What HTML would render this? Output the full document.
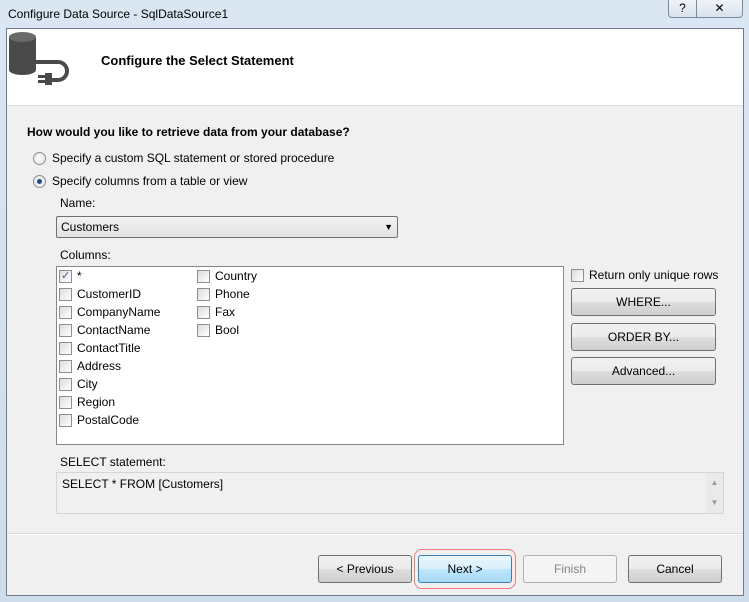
<!DOCTYPE html>
<html><head><style>
*{box-sizing:border-box;margin:0;padding:0}
body{width:749px;height:602px;position:relative;overflow:hidden;font-family:"Liberation Sans",sans-serif;font-size:12px;color:#000;background:linear-gradient(#dbe6f3,#cfdcec)}
.a{position:absolute;white-space:nowrap}
.cb{position:absolute;width:13px;height:13px;border:1px solid #8f8f8f;background:linear-gradient(135deg,#dcdcdc,#fff);}
.btn{position:absolute;height:28px;border:1px solid #707070;border-radius:3px;background:linear-gradient(#f2f2f2 0%,#ebebeb 50%,#dddddd 51%,#cfcfcf 100%);text-align:center;line-height:26px}
.rb{position:absolute;width:13px;height:13px;border-radius:50%;border:1px solid #8e8f8f;background:radial-gradient(#fff,#e0e0e0)}
</style></head><body>
<div class="a" style="left:8px;top:7px;font-size:12px">Configure Data Source - SqlDataSource1</div>
<div class="a" style="left:668px;top:0;width:29px;height:18px;border:1px solid #7a8aa0;border-top:none;border-radius:0 0 0 4px;background:linear-gradient(#f0f4f9,#d8e2ee);text-align:center;font-size:12px;line-height:16px">?</div>
<div class="a" style="left:696px;top:0;width:47px;height:18px;border:1px solid #7a8aa0;border-top:none;border-radius:0 0 4px 0;background:linear-gradient(#f0f4f9,#d8e2ee);text-align:center;font-size:12px;line-height:16px">✕</div>
<div class="a" style="left:6px;top:28px;width:738px;height:568px;border:1px solid #6d7b8c;background:#f0f0f0"></div>
<div class="a" style="left:7px;top:29px;width:736px;height:77px;background:#fff;border-bottom:1px solid #dfdfdf"></div>
<svg class="a" style="left:8px;top:32px" width="62" height="54" viewBox="0 0 62 54">
<rect x="1" y="5" width="27" height="33" fill="#4a4a4a"/>
<ellipse cx="14.5" cy="38" rx="13.5" ry="5" fill="#4a4a4a"/>
<ellipse cx="14.5" cy="5" rx="13.5" ry="5" fill="#6a6a6a"/>
<path d="M28 30 H50 A9 9 0 0 1 50 48 H44" fill="none" stroke="#4a4a4a" stroke-width="4"/>
<rect x="37" y="41" width="7" height="12" fill="#4a4a4a"/>
<rect x="30" y="43" width="7" height="3" fill="#4a4a4a"/><rect x="30" y="48" width="7" height="3" fill="#4a4a4a"/>
</svg>
<div class="a" style="left:101px;top:53px;font-weight:bold;font-size:13px">Configure the Select Statement</div>
<div class="a" style="left:27px;top:125px;font-weight:bold">How would you like to retrieve data from your database?</div>
<div class="rb" style="left:33px;top:152px"></div>
<div class="a" style="left:52px;top:151px">Specify a custom SQL statement or stored procedure</div>
<div class="rb" style="left:33px;top:175px"><div style="position:absolute;left:3px;top:3px;width:5px;height:5px;border-radius:50%;background:#1c4f8a"></div></div>
<div class="a" style="left:52px;top:174px">Specify columns from a table or view</div>
<div class="a" style="left:60px;top:196px">Name:</div>
<div class="a" style="left:56px;top:216px;width:342px;height:22px;border:1px solid #707070;border-radius:2px;background:linear-gradient(#f2f2f2,#e2e2e2)"><span class="a" style="left:4px;top:3px">Customers</span><span class="a" style="right:4px;top:5px;font-size:9px">▼</span></div>
<div class="a" style="left:60px;top:248px">Columns:</div>
<div class="a" style="left:56px;top:266px;width:508px;height:179px;border:1px solid #828790;background:#fff"></div>
<div class="cb" style="left:59px;top:270px"><span class="a" style="left:1px;top:-2px;color:#4a5f97;font-size:11px">✓</span></div><div class="a" style="left:77px;top:269px">*</div>
<div class="cb" style="left:59px;top:288px"></div><div class="a" style="left:77px;top:287px">CustomerID</div>
<div class="cb" style="left:59px;top:306px"></div><div class="a" style="left:77px;top:305px">CompanyName</div>
<div class="cb" style="left:59px;top:324px"></div><div class="a" style="left:77px;top:323px">ContactName</div>
<div class="cb" style="left:59px;top:342px"></div><div class="a" style="left:77px;top:341px">ContactTitle</div>
<div class="cb" style="left:59px;top:360px"></div><div class="a" style="left:77px;top:359px">Address</div>
<div class="cb" style="left:59px;top:378px"></div><div class="a" style="left:77px;top:377px">City</div>
<div class="cb" style="left:59px;top:396px"></div><div class="a" style="left:77px;top:395px">Region</div>
<div class="cb" style="left:59px;top:414px"></div><div class="a" style="left:77px;top:413px">PostalCode</div>
<div class="cb" style="left:197px;top:270px"></div><div class="a" style="left:215px;top:269px">Country</div>
<div class="cb" style="left:197px;top:288px"></div><div class="a" style="left:215px;top:287px">Phone</div>
<div class="cb" style="left:197px;top:306px"></div><div class="a" style="left:215px;top:305px">Fax</div>
<div class="cb" style="left:197px;top:324px"></div><div class="a" style="left:215px;top:323px">Bool</div>
<div class="cb" style="left:571px;top:269px"></div><div class="a" style="left:589px;top:268px">Return only unique rows</div>
<div class="btn" style="left:571px;top:288px;width:145px">WHERE...</div>
<div class="btn" style="left:571px;top:323px;width:145px">ORDER BY...</div>
<div class="btn" style="left:571px;top:357px;width:145px">Advanced...</div>
<div class="a" style="left:60px;top:455px">SELECT statement:</div>
<div class="a" style="left:56px;top:472px;width:668px;height:42px;border:1px solid #d5d5d5;background:#f0f0f0"><span class="a" style="left:5px;top:4px">SELECT * FROM [Customers]</span><div class="a" style="right:0;top:0;width:17px;height:40px;background:#eaeaea;color:#999;font-size:8px;text-align:center;line-height:20px">▲<br>▼</div></div>
<div class="a" style="left:7px;top:533px;width:736px;border-top:1px solid #dadada;border-bottom:1px solid #fff"></div>
<div class="btn" style="left:318px;top:555px;width:94px">&lt; Previous</div>
<div class="a" style="left:414px;top:549px;width:102px;height:40px;border:1px solid #f27c7c;border-radius:8px"></div>
<div class="btn" style="left:418px;top:555px;width:94px;border-color:#3c7fb1;background:linear-gradient(#eaf6fd,#d9f0fc 50%,#bee6fd 51%,#a7d9f5)">Next &gt;</div>
<div class="btn" style="left:523px;top:555px;width:94px;border-color:#adb2b5;background:#f4f4f4;color:#838383">Finish</div>
<div class="btn" style="left:628px;top:555px;width:94px">Cancel</div>
</body></html>
